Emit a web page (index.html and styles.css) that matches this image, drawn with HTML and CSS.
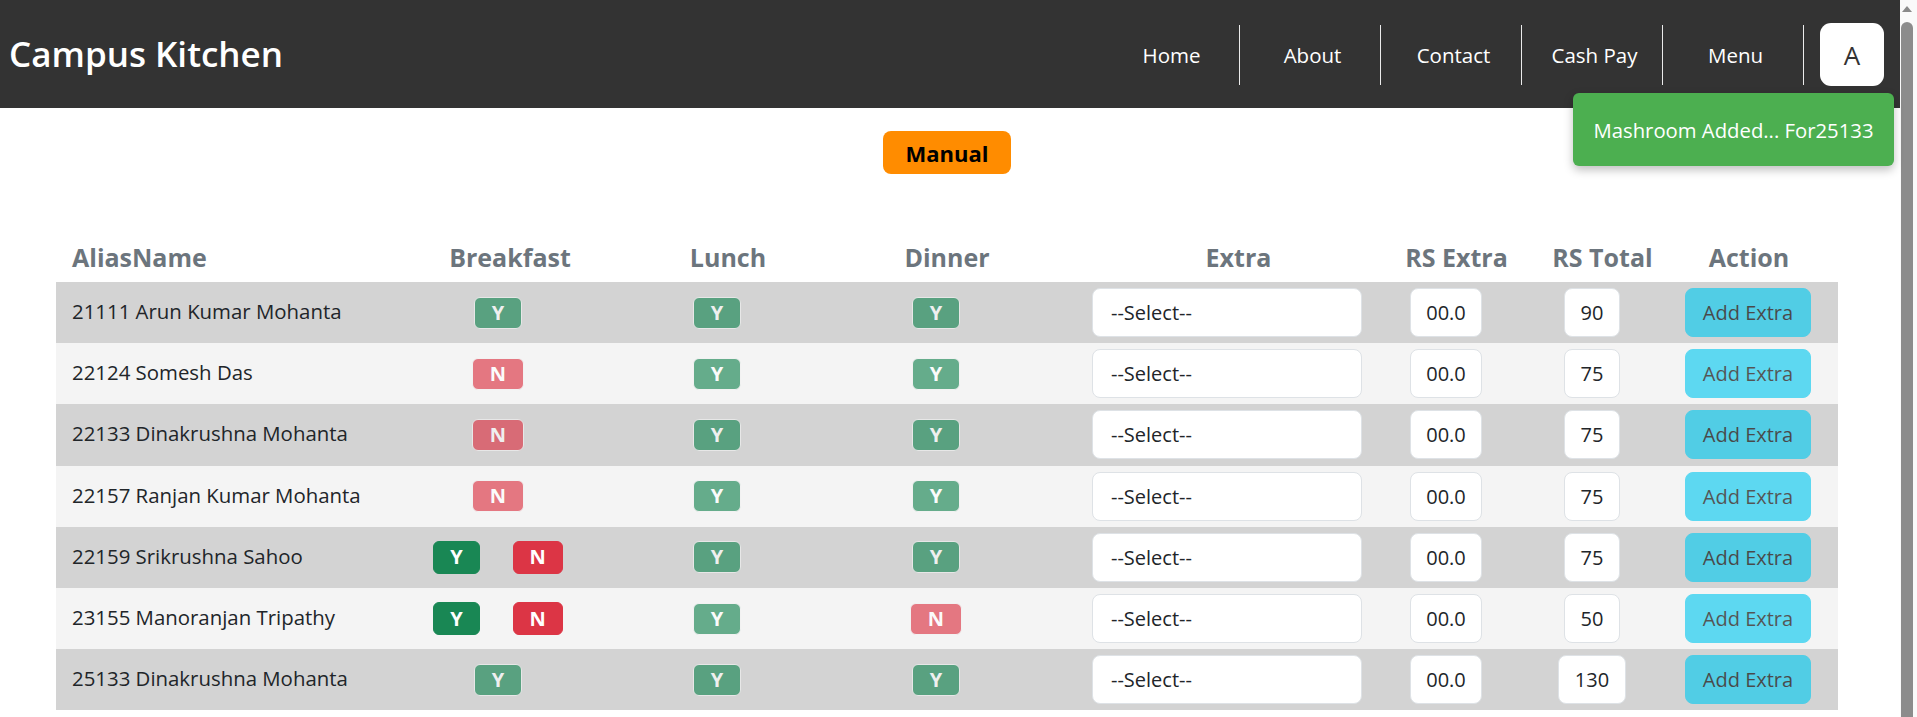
FILE: index.html
```html
<!DOCTYPE html>
<html lang="en">
<head>
<meta charset="utf-8">
<title>Campus Kitchen</title>
<link rel="stylesheet" href="styles.css">
</head>
<body>
<div class="app">
  <div class="page">
    <header class="navbar">
      <div class="brand">Campus Kitchen</div>
      <nav class="nav-links">
        <a class="nav-item">Home</a>
        <a class="nav-item">About</a>
        <a class="nav-item">Contact</a>
        <a class="nav-item">Cash Pay</a>
        <a class="nav-item">Menu</a>
      </nav>
      <button class="avatar">A</button>
    </header>

    <div class="toast">Mashroom Added... For25133</div>

    <main class="content">
      <div class="mode-row"><span class="mode">Manual</span></div>

      <table class="meals">
        <colgroup>
          <col class="w-name"><col class="w-b"><col class="w-l"><col class="w-d">
          <col class="w-x"><col class="w-rx"><col class="w-rt"><col class="w-act">
        </colgroup>
        <thead>
          <tr>
            <th class="c-name">AliasName</th>
            <th class="c-b">Breakfast</th>
            <th class="c-l">Lunch</th>
            <th class="c-d">Dinner</th>
            <th class="c-x">Extra</th>
            <th class="c-rx">RS Extra</th>
            <th class="c-rt">RS Total</th>
            <th class="c-act">Action</th>
          </tr>
        </thead>
        <tbody>
          <tr>
            <td class="c-name">21111 Arun Kumar Mohanta</td>
            <td class="c-b"><span class="yn y off">Y</span></td>
            <td class="c-l"><span class="yn y off">Y</span></td>
            <td class="c-d"><span class="yn y off">Y</span></td>
            <td class="c-x"><select class="select"><option>--Select--</option></select></td>
            <td class="c-rx"><input class="field f4" value="00.0" readonly></td>
            <td class="c-rt"><input class="field f2" value="90" readonly></td>
            <td class="c-act"><button class="add" disabled>Add Extra</button></td>
          </tr>
          <tr>
            <td class="c-name">22124 Somesh Das</td>
            <td class="c-b"><span class="yn n off">N</span></td>
            <td class="c-l"><span class="yn y off">Y</span></td>
            <td class="c-d"><span class="yn y off">Y</span></td>
            <td class="c-x"><select class="select"><option>--Select--</option></select></td>
            <td class="c-rx"><input class="field f4" value="00.0" readonly></td>
            <td class="c-rt"><input class="field f2" value="75" readonly></td>
            <td class="c-act"><button class="add" disabled>Add Extra</button></td>
          </tr>
          <tr>
            <td class="c-name">22133 Dinakrushna Mohanta</td>
            <td class="c-b"><span class="yn n off">N</span></td>
            <td class="c-l"><span class="yn y off">Y</span></td>
            <td class="c-d"><span class="yn y off">Y</span></td>
            <td class="c-x"><select class="select"><option>--Select--</option></select></td>
            <td class="c-rx"><input class="field f4" value="00.0" readonly></td>
            <td class="c-rt"><input class="field f2" value="75" readonly></td>
            <td class="c-act"><button class="add" disabled>Add Extra</button></td>
          </tr>
          <tr>
            <td class="c-name">22157 Ranjan Kumar Mohanta</td>
            <td class="c-b"><span class="yn n off">N</span></td>
            <td class="c-l"><span class="yn y off">Y</span></td>
            <td class="c-d"><span class="yn y off">Y</span></td>
            <td class="c-x"><select class="select"><option>--Select--</option></select></td>
            <td class="c-rx"><input class="field f4" value="00.0" readonly></td>
            <td class="c-rt"><input class="field f2" value="75" readonly></td>
            <td class="c-act"><button class="add" disabled>Add Extra</button></td>
          </tr>
          <tr>
            <td class="c-name">22159 Srikrushna Sahoo</td>
            <td class="c-b"><span class="pair"><span class="yn y">Y</span><span class="yn n">N</span></span></td>
            <td class="c-l"><span class="yn y off">Y</span></td>
            <td class="c-d"><span class="yn y off">Y</span></td>
            <td class="c-x"><select class="select"><option>--Select--</option></select></td>
            <td class="c-rx"><input class="field f4" value="00.0" readonly></td>
            <td class="c-rt"><input class="field f2" value="75" readonly></td>
            <td class="c-act"><button class="add" disabled>Add Extra</button></td>
          </tr>
          <tr>
            <td class="c-name">23155 Manoranjan Tripathy</td>
            <td class="c-b"><span class="pair"><span class="yn y">Y</span><span class="yn n">N</span></span></td>
            <td class="c-l"><span class="yn y off">Y</span></td>
            <td class="c-d"><span class="yn n off">N</span></td>
            <td class="c-x"><select class="select"><option>--Select--</option></select></td>
            <td class="c-rx"><input class="field f4" value="00.0" readonly></td>
            <td class="c-rt"><input class="field f2" value="50" readonly></td>
            <td class="c-act"><button class="add" disabled>Add Extra</button></td>
          </tr>
          <tr>
            <td class="c-name">25133 Dinakrushna Mohanta</td>
            <td class="c-b"><span class="yn y off">Y</span></td>
            <td class="c-l"><span class="yn y off">Y</span></td>
            <td class="c-d"><span class="yn y off">Y</span></td>
            <td class="c-x"><select class="select"><option>--Select--</option></select></td>
            <td class="c-rx"><input class="field f4" value="00.0" readonly></td>
            <td class="c-rt"><input class="field f3" value="130" readonly></td>
            <td class="c-act"><button class="add" disabled>Add Extra</button></td>
          </tr>
        </tbody>
      </table>
    </main>
  </div>

  <div class="scrollbar">
    <span class="sb-arrow"></span>
    <span class="sb-thumb"></span>
  </div>
</div>
</body>
</html>
```
FILE: styles.css
```css
html, body {
  margin: 0;
  padding: 0;
  height: 100%;
  overflow: hidden;
}

body {
  font-family: "Open Sans", "Noto Sans", sans-serif;
  font-size: 20px;
  color: #212529;
  background: #fff;
}

.app {
  display: flex;
  height: 717px;
  overflow: hidden;
}

.page {
  flex: 1;
  min-width: 0;
  position: relative;
}

/* ---------- navbar ---------- */
.navbar {
  height: 108px;
  background: #333333;
  display: flex;
  align-items: center;
  padding: 0 16px 0 9px;
  box-sizing: border-box;
}

.brand {
  color: #fff;
  font-size: 35px;
  font-weight: 600;
  line-height: 1;
  margin-top: -2px;
}

.nav-links {
  margin-left: auto;
  display: flex;
  gap: 5px;
}

.nav-item {
  width: 135px;
  height: 59px;
  display: flex;
  align-items: center;
  justify-content: center;
  color: #fff;
  font-size: 20.5px;
  border-right: 1px solid rgba(255, 255, 255, 0.9);
  margin-top: 2px;
  padding-bottom: 1px;
  box-sizing: content-box;
}

.avatar {
  margin-left: 16px;
  width: 64px;
  height: 63px;
  border: none;
  border-radius: 11px;
  background: #fff;
  color: #333;
  font-family: inherit;
  font-size: 26px;
  padding: 0;
  margin-top: 1px;
}

/* ---------- toast ---------- */
.toast {
  position: absolute;
  left: 1573px;
  top: 93px;
  width: 321px;
  height: 73px;
  box-sizing: border-box;
  background: #4caf50;
  color: #fff;
  border-radius: 6px;
  box-shadow: 0 4px 10px rgba(0, 0, 0, 0.25);
  display: flex;
  align-items: center;
  justify-content: center;
  font-size: 20.3px;
  z-index: 10;
}

/* ---------- content ---------- */
.content {
  padding-top: 23px;
}

.mode-row {
  display: flex;
  justify-content: center;
  padding-right: 6px;
}

.mode {
  display: flex;
  align-items: center;
  justify-content: center;
  width: 128px;
  height: 43px;
  background: #ff8c00;
  color: #000;
  font-weight: 700;
  font-size: 22px;
  border-radius: 8px;
}

.meals {
  margin: 58px 0 0 56px;
  width: 1782px;
  table-layout: fixed;
  border-collapse: collapse;
}

.w-name { width: 344px; }
.w-b { width: 230px; }
.w-l { width: 205px; }
.w-d { width: 205px; }
.w-x { width: 343px; }
.w-rx { width: 147px; }
.w-rt { width: 139px; }
.w-act { width: 169px; }

.meals th {
  height: 50px;
  padding: 0;
  font-size: 25px;
  font-weight: 700;
  color: #6c757d;
  text-align: center;
  white-space: nowrap;
  vertical-align: middle;
}

.meals td {
  height: 61.2px;
  box-sizing: border-box;
  padding: 0;
  text-align: center;
  vertical-align: middle;
  white-space: nowrap;
}

.meals tbody tr:nth-child(odd) { background: #d3d3d3; }
.meals tbody tr:nth-child(even) { background: #f4f4f4; }

th.c-name { text-align: left; padding-left: 16px; }
th.c-b { padding-right: 10px; }
th.c-l { padding-right: 9px; }
th.c-d { padding-left: 19px; }
th.c-x { padding-left: 54px; }
th.c-rt { padding-left: 6px; }
th.c-act { padding-right: 9px; }

td.c-name { text-align: left; padding-left: 16px; padding-bottom: 3px; font-size: 20.4px; }
td.c-b { padding-right: 34px; }
td.c-l { padding-right: 31px; }
td.c-d { padding-right: 3px; }
td.c-x { text-align: left; padding-left: 52px; }
td.c-rx { padding-right: 21px; }
td.c-rt { padding-right: 15px; }
td.c-act { padding-right: 11px; }

/* Y / N buttons */
.pair {
  display: inline-flex;
  gap: 33px;
  vertical-align: middle;
}

.yn {
  display: inline-flex;
  align-items: center;
  justify-content: center;
  box-sizing: border-box;
  height: 33px;
  padding: 0 16px;
  border-radius: 6px;
  border: 1px solid transparent;
  color: #fff;
  font-weight: 700;
  font-size: 20px;
  line-height: 1;
  vertical-align: middle;
}

.yn.y { background: #198754; border-color: #198754; }
.yn.n { background: #dc3545; border-color: #dc3545; }

.yn.off {
  opacity: 0.65;
  height: 32px;
  padding: 0 17px;
  border-color: #f2f2f2;
}

/* form controls */
.select {
  -webkit-appearance: none;
  appearance: none;
  width: 270px;
  height: 49px;
  box-sizing: border-box;
  border: 1px solid #dee2e6;
  border-radius: 8px;
  background: #fff;
  padding: 0 0 0 18px;
  font-family: inherit;
  font-size: 20px;
  color: #212529;
  vertical-align: middle;
}

.field {
  height: 49px;
  box-sizing: border-box;
  border: 1px solid #dee2e6;
  border-radius: 8px;
  background: #fff;
  padding: 0;
  text-align: center;
  font-family: inherit;
  font-size: 20px;
  color: #212529;
  vertical-align: middle;
  outline: none;
}

.f2 { width: 56px; }
.f3 { width: 68px; }
.f4 { width: 72px; }

.add {
  width: 126px;
  height: 49px;
  box-sizing: border-box;
  border: 1px solid #0dcaf0;
  border-radius: 8px;
  background: #0dcaf0;
  color: #000;
  opacity: 0.65;
  font-family: inherit;
  font-size: 20px;
  padding: 0;
  vertical-align: middle;
}

/* fake window scrollbar */
.scrollbar {
  width: 17px;
  flex: none;
  background: #fafafa;
  display: flex;
  flex-direction: column;
  align-items: center;
}

.sb-arrow {
  margin-top: 6px;
  width: 0;
  height: 0;
  border-left: 5px solid transparent;
  border-right: 5px solid transparent;
  border-bottom: 6px solid #8a8a8a;
  margin-right: 4px;
}

.sb-thumb {
  margin-top: 10px;
  width: 12px;
  flex: 1;
  background: #8c8c8c;
  border-radius: 6px 6px 0 0;
  margin-right: 4px;
}
```
